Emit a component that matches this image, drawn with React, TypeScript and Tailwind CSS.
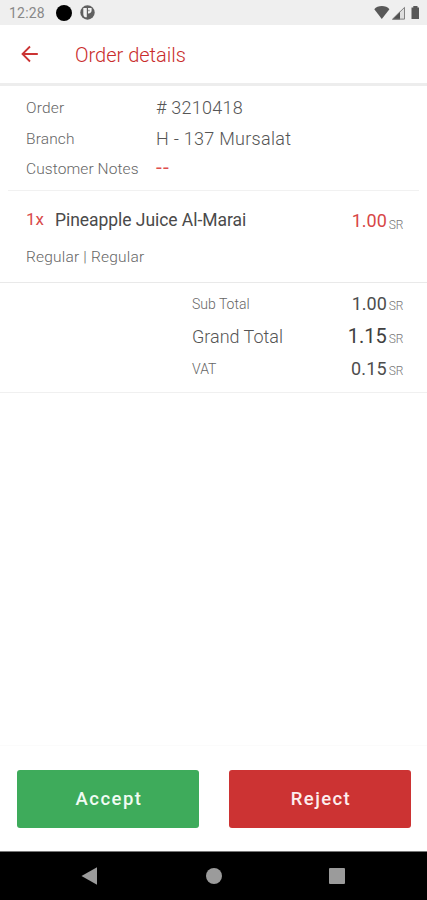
import type { ReactNode } from 'react';

function StatusBar() {
  return (
    <div className="flex h-[25px] items-center bg-[#efefef] pl-[9px] pr-[7px]">
      <span className="w-[47px] pt-px text-[14px] font-normal leading-[24px] tracking-[0.2px] text-[#888]">12:28</span>
      <span className="size-4 rounded-full bg-black" />
      <svg className="ml-[8px] size-[15px]" viewBox="0 0 15 15">
        <circle cx="7.5" cy="7.5" r="7.2" fill="#606060" />
        <path d="M3.3 3h3.5v9.2H5.2C4 11.8 3.3 10.6 3.3 9zM8 3h3.6v2.4A3 3 0 0 1 8 8.4z" fill="#f3f3f3" />
        <path d="M8.2 4.7h1.4v1.6H8.2z" fill="#888" />
      </svg>
      <div className="ml-auto flex items-center">
        <svg className="h-[25px] w-[47px]" viewBox="0 0 47 25">
          <path d="M1.3 9.2C4.3 5 13.4 5 16.4 9.2L8.8 19z" fill="#585858" />
          <path d="M31.8 6.7v12.7H19z" fill="#dedede" />
          <path d="M27 11.5v7.9h-8z" fill="#505050" />
          <path d="M31.5 7.4v11.7H19.7z" fill="none" stroke="#777" strokeWidth=".9" />
          <path d="M40.3 6h4.2v1.5H46V19h-7.5V7.5h1.8z" fill="#585858" />
        </svg>
      </div>
    </div>
  );
}

function DetailRow({ label, spacing, className, children }: { label: string; spacing: string; className: string; children: ReactNode }) {
  return (
    <div className={`flex items-center ${className}`}>
      <span className={`w-[130px] whitespace-nowrap pt-[2px] text-[15.5px] text-[#666] ${spacing}`}>{label}</span>
      {children}
    </div>
  );
}

function Price({ value, className, unitClassName = '' }: { value: string; className: string; unitClassName?: string }) {
  return (
    <span className="ml-auto flex items-baseline whitespace-nowrap">
      <span className={className}>{value}</span>
      <span className={`ml-[2px] text-[12px] tracking-[-0.3px] text-[#777] ${unitClassName}`}>SR</span>
    </span>
  );
}

export default function App() {
  return (
    <div className="flex h-[900px] w-[427px] flex-col overflow-hidden bg-white font-['Roboto','Liberation_Sans',sans-serif] font-light">
      <StatusBar />
      <header className="flex h-[61px] items-center border-b-[3px] border-[#ededed] pl-[21px]">
        <svg className="h-[18px] w-[18px]" viewBox="0 0 18 18" fill="none" stroke="#cb3333" strokeWidth="1.8">
          <path d="M16.8 9H2M9 1.5 1.5 9 9 16.5" />
        </svg>
        <h1 className="ml-[36px] pt-[2px] text-[20px] text-[#c92c2c]">Order details</h1>
      </header>

      <section className="mx-2 h-[105px] border-b border-[#f1f1f1] pl-[18px] pt-[7px]">
        <DetailRow label="Order" spacing="tracking-[0.2px]" className="h-[30px]">
          <span className="pb-px text-[18px] tracking-[0.25px] text-[#555]"># 3210418</span>
        </DetailRow>
        <DetailRow label="Branch" spacing="tracking-[0.15px]" className="h-[31px]">
          <span className="text-[18px] tracking-[0.28px] text-[#555]">H - 137 Mursalat</span>
        </DetailRow>
        <DetailRow label="Customer Notes" spacing="tracking-[0.1px]" className="h-[29px]">
          <span className="pb-[2px] text-[21px] font-normal tracking-[1.2px] text-[#e04d4d]">--</span>
        </DetailRow>
      </section>

      <section className="h-[92px] border-b border-[#e9e9e9] pl-[26px] pr-[24px] pt-[12px]">
        <div className="flex h-[34px] items-center">
          <span className="w-[29px] text-[17px] font-normal text-[#d94b4b]">1x</span>
          <span className="whitespace-nowrap text-[17.5px] font-normal tracking-[-0.05px] text-[#4a4a4a]">Pineapple Juice Al-Marai</span>
          <Price value="1.00" className="text-[18px] font-normal text-[#d84646]" unitClassName="relative top-[2px]" />
        </div>
        <div className="flex h-[40px] items-center pt-[2px] text-[15.5px] tracking-[0.2px] text-[#666]">Regular | Regular</div>
      </section>

      <section className="h-[110px] border-b border-[#f0f0f0] pl-[192px] pr-[24px] pt-[4px]">
        <div className="flex h-[33px] items-center">
          <span className="pt-[2px] text-[14px] text-[#666]">Sub Total</span>
          <Price value="1.00" className="text-[18px] font-normal text-[#4d4d4d]" />
        </div>
        <div className="flex h-[32px] items-center">
          <span className="text-[18px] text-[#555]">Grand Total</span>
          <Price value="1.15" className="text-[20px] font-normal text-[#404040]" />
        </div>
        <div className="flex h-[33px] items-center">
          <span className="pt-[2px] text-[14px] text-[#666]">VAT</span>
          <Price value="0.15" className="text-[18px] font-normal tracking-[0.2px] text-[#4d4d4d]" />
        </div>
      </section>

      <footer className="mt-auto flex h-[106px] items-start justify-between border-t border-[#fbfbfb] pl-[17px] pr-[16px] pt-[24px]">
        <button className="h-[58px] w-[182px] rounded-[3px] bg-[#3eab5b] pl-[2px] pt-[2px] text-[18.5px] font-medium tracking-[1.5px] text-[#f1fbf3]">Accept</button>
        <button className="h-[58px] w-[182px] rounded-[3px] bg-[#cc3333] pl-[2px] pt-[2px] text-[18.5px] font-medium tracking-[1.4px] text-[#fdeeee]">Reject</button>
      </footer>

      <nav className="flex h-[49px] items-center border-t border-[#777] bg-black pl-[81px] pr-[82px]">
        <svg className="h-[18px] w-[264px]" viewBox="0 0 264 18" fill="#9b9b9b">
          <path d="M.5 9 16 .3v17.4z" />
          <circle cx="133" cy="9" r="8" />
          <rect x="248" y="1" width="16" height="16" rx="1" />
        </svg>
      </nav>
    </div>
  );
}
